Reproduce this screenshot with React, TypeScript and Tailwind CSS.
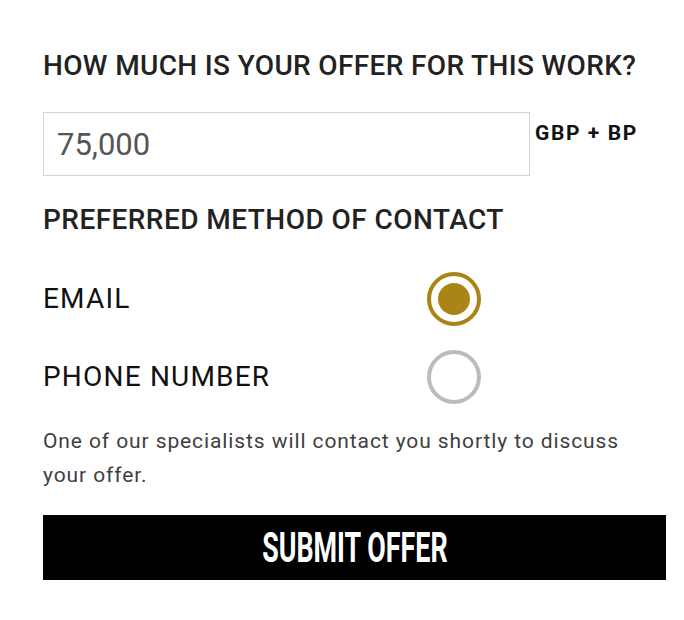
import { useState } from "react";

const Radio = ({ checked }: { checked: boolean }) => (
  <span
    className={`flex h-[54px] w-[54px] shrink-0 items-center justify-center rounded-full border-[4px] ${
      checked ? "border-[#ab8418]" : "border-[#bcbcb7]"
    }`}
  >
    {checked && <span className="h-[32px] w-[32px] rounded-full bg-[#ab8418]" />}
  </span>
);

export default function App() {
  const [method, setMethod] = useState("email");
  const [offer, setOffer] = useState("75,000");

  const options = [
    { id: "email", label: "EMAIL" },
    { id: "phone", label: "PHONE NUMBER" },
  ];

  return (
    <div className="min-h-[620px] bg-white font-['Roboto',sans-serif] text-[#111]">
      <div className="w-[666px] pl-[43px] pt-[50px]">
        <h2 className="text-[28px] font-medium leading-[32px] tracking-[0.35px] text-[#222]">
          HOW MUCH IS YOUR OFFER FOR THIS WORK?
        </h2>

        <div className="mt-[30px] flex items-start gap-[5px]">
          <input
            value={offer}
            onChange={(e) => setOffer(e.target.value)}
            className="h-[64px] w-[487px] border border-[#d3d3d3] px-[13px] text-[31px] text-[#555] outline-none"
          />
          <span className="mt-[9px] text-[21px] font-bold leading-[24px] tracking-[1.6px]">GBP + BP</span>
        </div>

        <h3 className="mt-[28px] text-[28px] font-medium leading-[32px] tracking-[0.45px] text-[#222]">
          PREFERRED METHOD OF CONTACT
        </h3>

        <div className="mt-[36px] flex flex-col gap-[24px]">
          {options.map((o) => (
            <label
              key={o.id}
              className="flex cursor-pointer items-center"
              onClick={() => setMethod(o.id)}
            >
              <span className="w-[384px] text-[28px] leading-[30px] tracking-[1.2px]">{o.label}</span>
              <Radio checked={method === o.id} />
            </label>
          ))}
        </div>

        <p className="mt-[20px] w-[600px] text-[21px] leading-[34px] tracking-[0.9px] text-[#3f3f3f]">
          One of our specialists will contact you shortly to discuss your offer.
        </p>

        <button className="mt-[23px] flex h-[65px] w-[623px] items-center justify-center bg-black">
          <span className="inline-block scale-x-[0.64] text-[42px] font-bold leading-[48px] text-white">
            SUBMIT OFFER
          </span>
        </button>
      </div>
    </div>
  );
}
